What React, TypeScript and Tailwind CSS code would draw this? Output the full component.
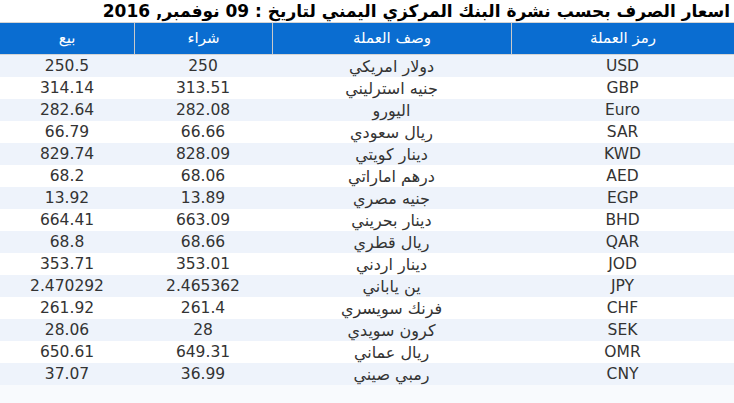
const ROWS: [string, string, string, string][] = [
  ["USD", "دولار امريكي", "250", "250.5"],
  ["GBP", "جنيه استرليني", "313.51", "314.14"],
  ["Euro", "اليورو", "282.08", "282.64"],
  ["SAR", "ريال سعودي", "66.66", "66.79"],
  ["KWD", "دينار كويتي", "828.09", "829.74"],
  ["AED", "درهم اماراتي", "68.06", "68.2"],
  ["EGP", "جنيه مصري", "13.89", "13.92"],
  ["BHD", "دينار بحريني", "663.09", "664.41"],
  ["QAR", "ريال قطري", "68.66", "68.8"],
  ["JOD", "دينار اردني", "353.01", "353.71"],
  ["JPY", "ين ياباني", "2.465362", "2.470292"],
  ["CHF", "فرنك سويسري", "261.4", "261.92"],
  ["SEK", "كرون سويدي", "28", "28.06"],
  ["OMR", "ريال عماني", "649.31", "650.61"],
  ["CNY", "رمبي صيني", "36.99", "37.07"],
]

const HEADERS = ["رمز العملة", "وصف العملة", "شراء", "بيع"]

export default function App() {
  return (
    <div
      dir="rtl"
      className="w-[734px] h-[403px] bg-white overflow-hidden"
      style={{ fontFamily: '"DejaVu Sans", Verdana, sans-serif' }}
    >
      <h1 className="h-[22px] pr-[4px] text-[17px] font-bold leading-[22px] text-black whitespace-nowrap">
        اسعار الصرف بحسب نشرة البنك المركزي اليمني لتاريخ : 09 نوفمبر, 2016
      </h1>

      {/* رأس الجدول */}
      <div className="grid grid-cols-[223px_239px_138px_134px] border-y border-[#d4d4d4] bg-[#0a6dd1]">
        {HEADERS.map((h, i) => (
          <div
            key={h}
            className={
              "h-[31px] flex items-center justify-center text-white text-[15px] " +
              (i < 3 ? "border-l border-[#c9c9c9]" : "")
            }
          >
            {h}
          </div>
        ))}
      </div>

      {/* الصفوف */}
      {ROWS.map((r, i) => (
        <div
          key={r[0]}
          className={
            "grid grid-cols-[223px_239px_138px_134px] h-[22px] text-[15.5px] text-[#333333] " +
            (i % 2 === 0 ? "bg-[#eef3fb]" : "bg-white")
          }
        >
          {r.map((c, j) => (
            <div
              key={j}
              className={
                "flex items-center justify-center whitespace-nowrap " +
                (j === 1 ? "text-[16px]" : "")
              }
            >
              {c}
            </div>
          ))}
        </div>
      ))}

      <div className="h-[18px] bg-[#f8fafd]" />
    </div>
  )
}
